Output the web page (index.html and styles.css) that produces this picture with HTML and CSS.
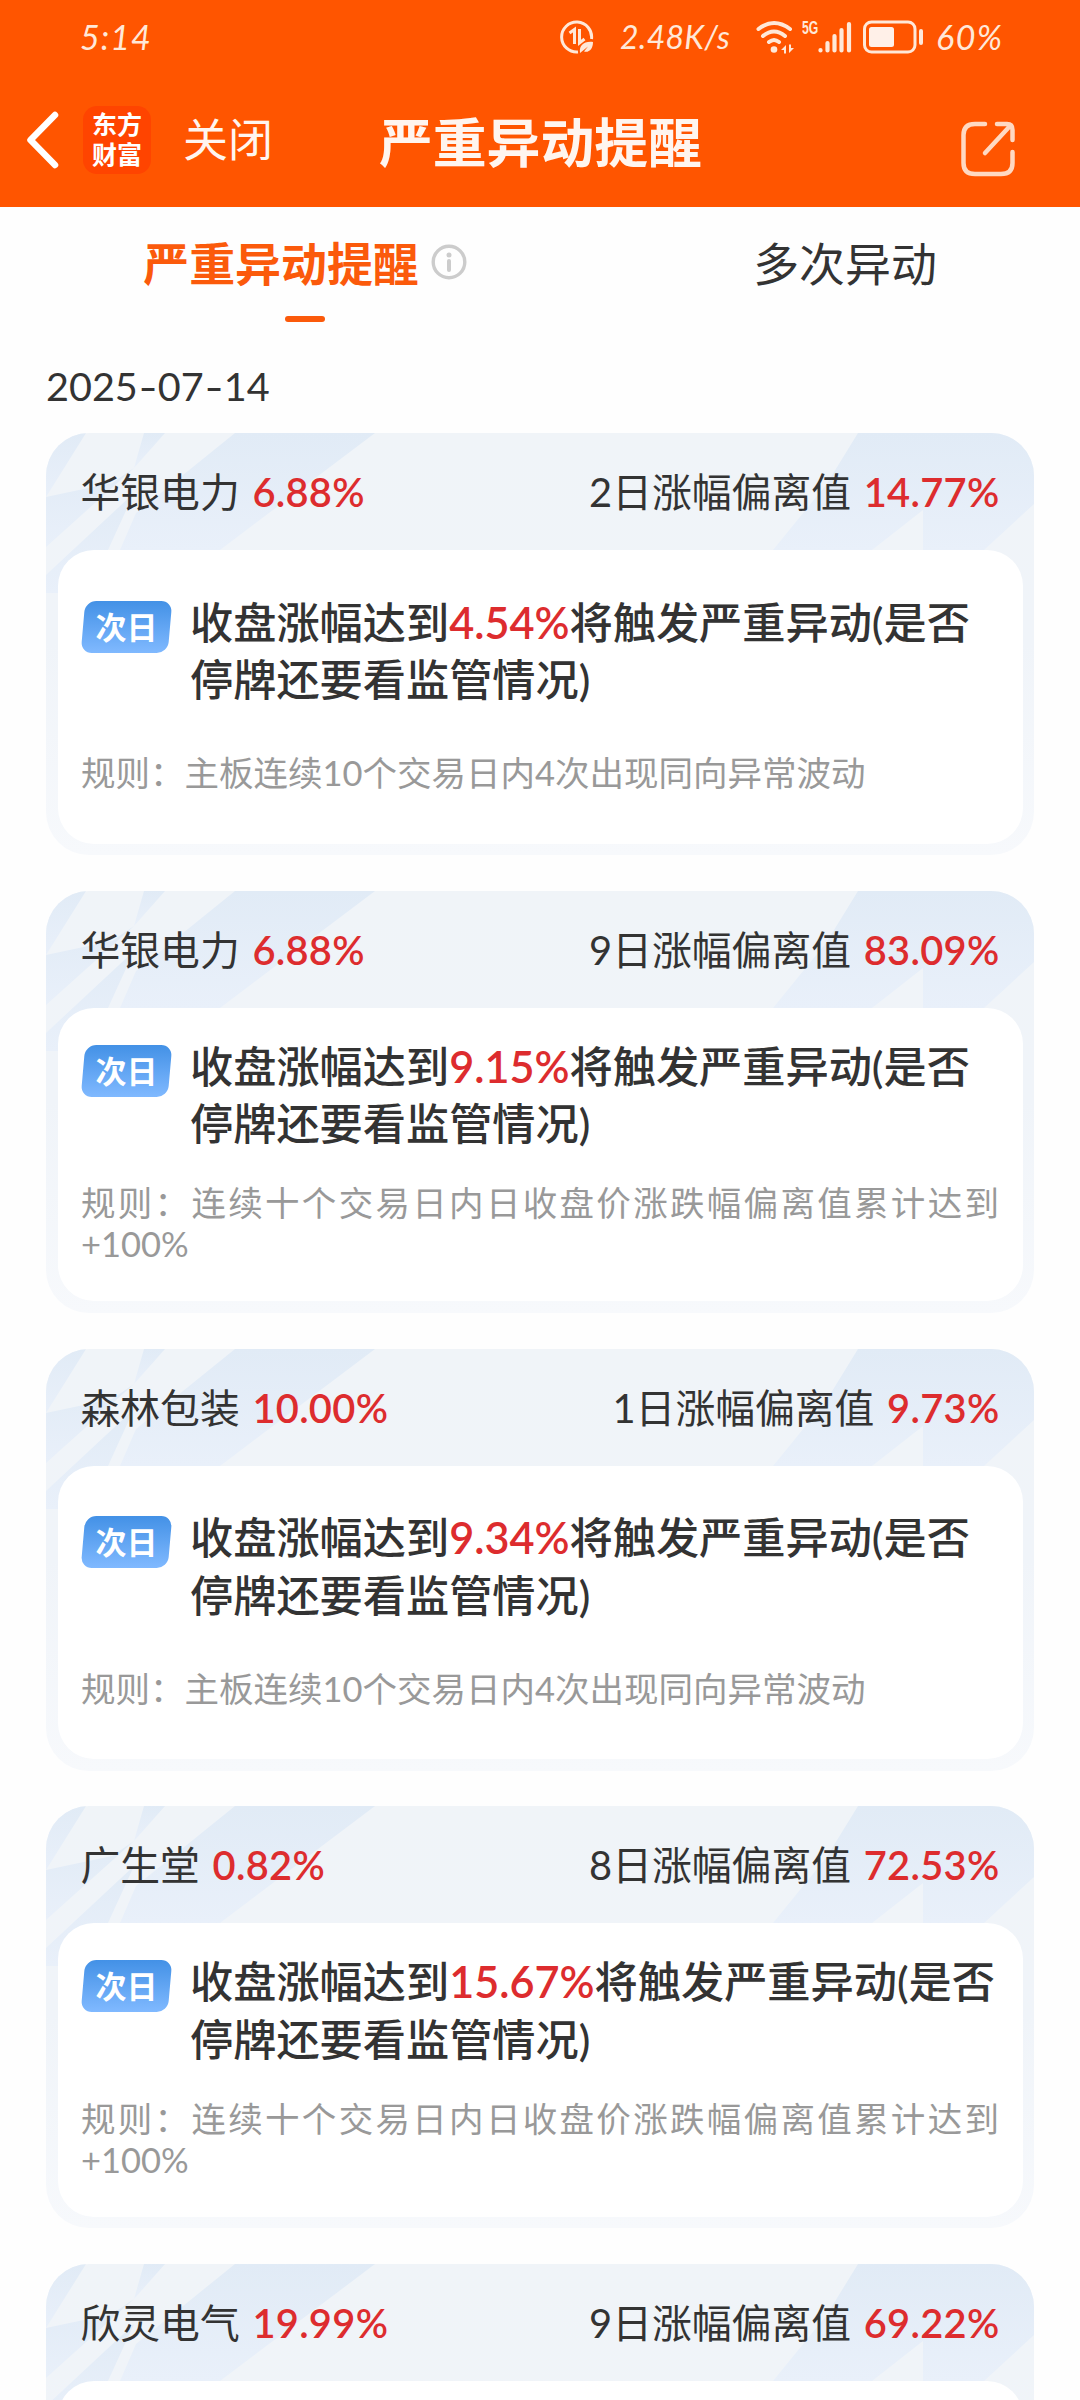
FILE: index.html
```html
<!DOCTYPE html>
<html lang="zh-CN">
<head>
    <meta charset="UTF-8">
    <meta name="viewport" content="width=device-width, initial-scale=1.0">
    <title>严重异动提醒</title>
    <link rel="stylesheet" href="styles.css">
</head>
<body>
    <!-- 卡片背景纹理 -->
    <svg class="defs" width="0" height="0">
        <defs>
            <linearGradient id="shade" x1="0" y1="0" x2="0" y2="1">
                <stop offset="0" stop-color="#e1ebf6"/>
                <stop offset="1" stop-color="#e9f0fa"/>
            </linearGradient>
        </defs>
        <symbol id="card-bg" viewBox="0 0 988 160">
            <g fill="url(#shade)">
                <path d="M0 0H40L0 64Z"/>
                <path d="M98 0H119L88 35Z"/>
                <path d="M0 64L66 50L88 35L0 114Z"/>
                <path d="M0 142L88 60L62 117L30 160H0Z"/>
                <path d="M189 0H329L174 117H74L90 80Z"/>
                <path d="M812 0H988V71L938 117H877V77L826 117H727L780 52Z"/>
            </g>
        </symbol>
    </svg>

    <header>
        <div class="status">
            <span class="time">5:14</span>
            <svg class="data-icon" width="34" height="34" viewBox="0 0 34 34" fill="none" stroke="#ffe8d8">
                <path d="M31.5 19A15 15 0 1 0 18 32" stroke-width="3"/>
                <path d="M9.500 13l5-3.500V24M19.500 9v14l5-4" stroke-width="3"/>
                <path d="M20 33c-1-8 4-12 13-11 0 7-4 11-9 9.500l4-5" stroke="none" fill="#ffe8d8"/>
            </svg>
            <span class="speed">2.48K/s</span>
            <svg class="wifi-icon" width="38" height="34" viewBox="0 0 38 34" fill="none" stroke="#ffe8d8" stroke-width="4" stroke-linecap="round">
                <path d="M2.500 9Q18 -3 34 9M7 16Q18 7 29 16M13 22Q18 18 23 22"/>
                <circle cx="18" cy="29.500" r="3.300" fill="#ffe8d8" stroke="none"/>
                <path d="M25 30l5-5v8.500h-2V30zM38 28l-5 5v-8.500h2V28z" fill="#ffe8d8" stroke="none"/>
            </svg>
            <span class="net">5G</span>
            <svg class="signal-icon" width="35" height="34" viewBox="0 0 35 34" stroke="#ffe8d8" stroke-width="4.200" stroke-linecap="round">
                <path d="M2.500 30v.5M9.500 23v7.500M16.500 16v14.500M23.500 10v20.500M31 4v26.500"/>
            </svg>
            <svg class="battery-icon" width="62" height="34" viewBox="0 0 62 34" fill="#ffe8d8">
                <rect x="1.500" y="2" width="50.500" height="30" rx="7" fill="none" stroke="#ffe8d8" stroke-width="3"/>
                <rect x="6" y="7" width="25" height="20" rx="2.500" fill="#fff0e8"/>
                <rect x="56" y="9" width="4" height="16" rx="2"/>
            </svg>
            <span class="battery">60%</span>
        </div>
        <nav>
            <svg class="back" width="34" height="58" viewBox="0 0 34 58" fill="none" stroke="#fff" stroke-width="6.500" stroke-linecap="round" stroke-linejoin="round">
                <path d="M29 4L4.500 29 29 54"/>
            </svg>
            <div class="logo">东方<br>财富</div>
            <span class="close">关闭</span>
            <h1>严重异动提醒</h1>
            <svg class="share" width="54" height="56" viewBox="0 0 54 56" fill="none" stroke="#ffd9c2" stroke-width="4.500" stroke-linecap="round" stroke-linejoin="round">
                <path d="M24 3H14Q2.500 3 2.500 14V42Q2.500 53 14 53H40Q51.500 53 51.500 42V31"/>
                <path d="M36 3H46Q51.500 3 51.500 9V19M49 5L24 32"/>
            </svg>
        </nav>
    </header>

    <div class="tabs">
        <div class="tab active">
            <span>严重异动提醒</span>
            <svg width="36" height="36" viewBox="0 0 36 36" fill="none" stroke="#ccc">
                <circle cx="18" cy="18" r="15.800" stroke-width="3.400"/>
                <path d="M18 17v9" stroke-width="4" stroke-linecap="round"/>
                <circle cx="18" cy="11" r="2.500" fill="#ccc" stroke="none"/>
            </svg>
        </div>
        <div class="tab"><span>多次异动</span></div>
    </div>

    <main>
        <div class="date">2025<i>-</i>07<i>-</i>14</div>

        <section class="card">
            <svg class="bg"><use href="#card-bg"/></svg>
            <div class="head">
                <span>华银电力 <b>6.88%</b></span>
                <span>2日涨幅偏离值 <b>14.77%</b></span>
            </div>
            <div class="body">
                <div class="info">
                    <div class="tag"><span>次日</span></div>
                    <p>收盘涨幅达到<b>4.54%</b>将触发严重异动(是否停牌还要看监管情况)</p>
                </div>
                <p class="rule">规则：主板连续10个交易日内4次出现同向异常波动</p>
            </div>
        </section>

        <section class="card">
            <svg class="bg"><use href="#card-bg"/></svg>
            <div class="head">
                <span>华银电力 <b>6.88%</b></span>
                <span>9日涨幅偏离值 <b>83.09%</b></span>
            </div>
            <div class="body">
                <div class="info">
                    <div class="tag"><span>次日</span></div>
                    <p>收盘涨幅达到<b>9.15%</b>将触发严重异动(是否停牌还要看监管情况)</p>
                </div>
                <p class="rule">规则：连续十个交易日内日收盘价涨跌幅偏离值累计达到+100%</p>
            </div>
        </section>

        <section class="card">
            <svg class="bg"><use href="#card-bg"/></svg>
            <div class="head">
                <span>森林包装 <b>10.00%</b></span>
                <span>1日涨幅偏离值 <b>9.73%</b></span>
            </div>
            <div class="body">
                <div class="info">
                    <div class="tag"><span>次日</span></div>
                    <p>收盘涨幅达到<b>9.34%</b>将触发严重异动(是否停牌还要看监管情况)</p>
                </div>
                <p class="rule">规则：主板连续10个交易日内4次出现同向异常波动</p>
            </div>
        </section>

        <section class="card">
            <svg class="bg"><use href="#card-bg"/></svg>
            <div class="head">
                <span>广生堂 <b>0.82%</b></span>
                <span>8日涨幅偏离值 <b>72.53%</b></span>
            </div>
            <div class="body">
                <div class="info">
                    <div class="tag"><span>次日</span></div>
                    <p>收盘涨幅达到<b>15.67%</b>将触发严重异动(是否停牌还要看监管情况)</p>
                </div>
                <p class="rule">规则：连续十个交易日内日收盘价涨跌幅偏离值累计达到+100%</p>
            </div>
        </section>

        <section class="card">
            <svg class="bg"><use href="#card-bg"/></svg>
            <div class="head">
                <span>欣灵电气 <b>19.99%</b></span>
                <span>9日涨幅偏离值 <b>69.22%</b></span>
            </div>
            <div class="body"></div>
        </section>
    </main>
</body>
</html>
```
FILE: styles.css
```css
* {
    margin: 0;
    padding: 0;
    box-sizing: border-box;
}
body {
    width: 1080px;
    height: 2400px;
    overflow: hidden;
    background: #fefefe;
    color: #333;
    font-family: Lato, "Noto Sans CJK SC", sans-serif;
}
svg {
    display: block;
    flex: none;
}
.defs {
    position: absolute;
}

/* 顶部 */
header {
    height: 207px;
    background: #ff5500;
    color: #fff5ef;
}
.status {
    display: flex;
    align-items: center;
    height: 73px;
    padding-left: 80px;
    color: #ffe8d8;
    font-size: 34px;
    font-style: italic;
    line-height: 40px;
    white-space: nowrap;
}
.time {
    width: 480px;
    letter-spacing: 1px;
}
.speed {
    width: 110px;
    margin: 0 26px 0 26px;
    font-size: 32px;
    letter-spacing: .3px;
}
.net {
    width: 16px;
    margin: -18px 0 0 8px;
    font-family: "Liberation Sans", sans-serif;
    font-size: 18px;
    font-style: normal;
    font-weight: bold;
    line-height: 20px;
    transform: scaleX(.68);
    transform-origin: left;
}
.battery-icon {
    margin: 0 11px 0 10px;
}
.battery {
    letter-spacing: 1.500px;
}
nav {
    display: flex;
    align-items: center;
    height: 134px;
    padding: 0 65px 0 26px;
}
.logo {
    width: 68px;
    height: 68px;
    margin-left: 23px;
    padding-top: 3px;
    border-radius: 14px;
    background: #ff4400;
    color: #fff;
    font-size: 25px;
    font-weight: 700;
    line-height: 30px;
    text-align: center;
}
.close {
    width: 196px;
    margin-left: 32px;
    font-size: 45px;
    font-weight: 400;
    line-height: 60px;
}
h1 {
    flex: 1;
    margin-top: 4px;
    font-size: 53.800px;
    line-height: 70px;
}
.share {
    margin-top: 18px;
}

/* 标签 */
.tabs {
    display: flex;
    height: 140px;
}
.tab {
    position: relative;
    display: flex;
    flex: 1;
    align-items: center;
    justify-content: center;
    height: 110px;
    padding-left: 70px;
    font-size: 45.900px;
}
.tab span {
    margin-top: -3px;
}
.tab svg {
    margin-left: 12px;
}
.active {
    color: #fb5a0b;
    font-weight: 700;
}
.active::after {
    content: "";
    position: absolute;
    left: 285px;
    bottom: -5px;
    width: 40px;
    height: 6px;
    border-radius: 3px;
    background: #fb5a0b;
}

/* 列表 */
main {
    padding: 0 46px;
}
.date {
    height: 86px;
    font-size: 39.600px;
    line-height: 77px;
}
.date i {
    display: inline-block;
    width: 20px;
    font-style: normal;
    text-align: center;
    transform: scaleX(1.3);
}
.card {
    position: relative;
    height: 422px;
    margin-bottom: 35.800px;
    padding: 0 11.500px;
    border-radius: 43px;
    background: linear-gradient(#f0f4f8 0%, #f0f4f9 50%, #f7f9fc 100%);
    overflow: hidden;
}
.bg {
    position: absolute;
    left: 0;
    top: 0;
    width: 988px;
    height: 160px;
}
.head {
    position: relative;
    display: flex;
    justify-content: space-between;
    height: 117px;
    padding: 0 23px;
    font-size: 39.800px;
    line-height: 117px;
}
b {
    color: #dd2c2e;
    font-weight: 600;
}
.head b {
    margin-left: 2.500px;
    letter-spacing: .3px;
}
.body {
    position: relative;
    display: flex;
    flex-direction: column;
    justify-content: space-evenly;
    height: 293.500px;
    padding: 0 23.500px 7px;
    border-radius: 36px;
    background: #fff;
}
.info {
    display: flex;
}
.info p {
    width: 820px;
    font-size: 43.200px;
    font-weight: 500;
    line-height: 57.500px;
}
.tag {
    flex: none;
    width: 87px;
    height: 52px;
    margin: 7px 20px 0 2px;
    border-radius: 11px;
    background: linear-gradient(#4391e6, #80b9ff);
    color: #fff;
    font-size: 31px;
    font-weight: 700;
    line-height: 52px;
    text-align: center;
    transform: skewX(-5deg);
}
.tag span {
    display: block;
    transform: skewX(5deg);
}
.rule {
    color: #999;
    font-size: 34.500px;
    line-height: 41px;
    text-align: justify;
}
```
